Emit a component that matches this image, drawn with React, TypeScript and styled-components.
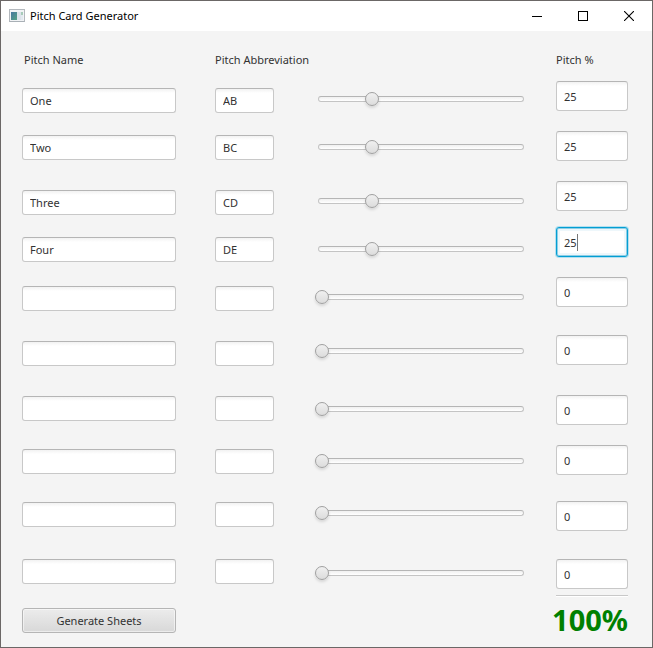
import React, { useState } from "react";
import styled, { createGlobalStyle, css } from "styled-components";

const GlobalStyle = createGlobalStyle`
  *, *::before, *::after { box-sizing: border-box; }
  body { margin: 0; background: #f4f4f4; }
  body, button, input { font-family: "Noto Sans", "Open Sans", sans-serif; font-size: 11px; }
`;

const Window = styled.div`
  display: flex;
  flex-direction: column;
  min-height: 100vh;
  border: 1px solid #6b6766;
  background: #f4f4f4;
  color: #323232;
`;

const TitleBar = styled.header`
  display: flex;
  align-items: center;
  height: 30px;
  padding-left: 8px;
  background: #fff;
  color: #000;
`;

const Title = styled.h1`
  flex: 1;
  margin: 0 0 0 5px;
  font-size: 11px;
  font-weight: 400;
  line-height: 16px;
`;

const CaptionButton = styled.button`
  display: flex;
  align-items: center;
  justify-content: center;
  width: 46px;
  height: 30px;
  padding: 0;
  border: 0;
  background: none;
`;

const Form = styled.main`
  display: grid;
  grid-template-columns: 154px 59px minmax(0, 1fr) 72px;
  column-gap: 39px;
  padding: 21px 24px 4px 21px;
`;

const Column = styled.section`
  display: flex;
  flex-direction: column;
`;

const SliderColumn = styled(Column)`
  padding-top: 39px;
  margin: 0 -10px 0 2px;
`;

const Heading = styled.h2<{ $space: number; $indent?: number }>`
  margin: 0 0 ${(p) => p.$space}px;
  padding-left: ${(p) => p.$indent ?? 0}px;
  font-size: 11px;
  font-weight: 400;
  line-height: 16px;
  white-space: nowrap;
`;

const Field = styled.input<{ $gap: number; $tall?: boolean; $active?: boolean }>`
  width: 100%;
  height: ${(p) => (p.$tall ? 30 : 25)}px;
  margin: ${(p) => p.$gap}px 0 0;
  padding: 0 7px;
  border: 1px solid #c8c8c8;
  border-top-color: #b5b5b5;
  border-radius: 3px;
  outline: none;
  background: linear-gradient(#f2f2f2, #fff 4px);
  color: #323232;
  ${(p) =>
    p.$active &&
    css`
      border-color: #039ed3;
      box-shadow: 0 0 0 1px #b4e0ef, inset 0 0 0 1px #8fcfe6, inset 0 0 0 3px #eef7fb;
      background: linear-gradient(#777, #777) 20px 6px / 1px 17px no-repeat #fff;
      caret-color: transparent;
    `}
`;

const SliderBox = styled.div<{ $gap: number }>`
  display: grid;
  align-items: center;
  height: 16px;
  margin-top: ${(p) => p.$gap}px;

  &::before {
    content: "";
    grid-area: 1 / 1;
    height: 6px;
    margin: 0 3px;
    border: 1px solid #c4c4c4;
    border-top-color: #b5b5b5;
    border-radius: 3px;
    background: linear-gradient(#f0f0f0, #fff);
  }
`;

const Slider = styled.input`
  grid-area: 1 / 1;
  width: 100%;
  height: 16px;
  margin: 0;
  appearance: none;
  background: transparent;

  &::-webkit-slider-thumb {
    appearance: none;
    width: 14px;
    height: 14px;
    border: 1px solid #a0a0a0;
    border-radius: 50%;
    background: linear-gradient(#f0f0f0, #dcdcdc);
    box-shadow: 0 2px 3px rgba(0, 0, 0, 0.12);
  }
`;

const GenerateButton = styled.button`
  height: 25px;
  margin-top: 24px;
  padding: 0;
  border: 1px solid #b5b5b5;
  border-radius: 3px;
  background: linear-gradient(#ececec, #d8d8d8);
  box-shadow: inset 0 0 0 1px rgba(255, 255, 255, 0.5);
  color: #323232;
`;

const Total = styled.output`
  display: flex;
  justify-content: flex-end;
  margin-top: 6px;
  padding-top: 4px;
  border-top: 1px solid #c8c8c8;
  box-shadow: inset 0 1px 0 #fff;
  color: #008000;
  font-size: 29px;
  font-weight: 700;
  line-height: 40px;
`;

const pitches = [
  { name: "One", abbr: "AB", percent: 25 },
  { name: "Two", abbr: "BC", percent: 25 },
  { name: "Three", abbr: "CD", percent: 25 },
  { name: "Four", abbr: "DE", percent: 25 },
  ...Array.from({ length: 6 }, () => ({ name: "", abbr: "", percent: 0 })),
];

const textGaps = [0, 22, 30, 22, 24, 30, 30, 28, 28, 32];
const sliderGaps = [0, 32, 38, 32, 32, 38, 42, 36, 36, 44];
const percentGaps = [0, 20, 20, 16, 20, 28, 30, 20, 26, 28];
const activeRow = 3;

const AppIcon = () => (
  <svg width="16" height="14" viewBox="0 0 16 14" aria-hidden="true">
    <defs>
      <linearGradient id="pane" x1="0" y1="0" x2="1" y2="1">
        <stop offset="0" stopColor="#4777a0" />
        <stop offset="1" stopColor="#55a283" />
      </linearGradient>
    </defs>
    <rect x="0.5" y="0.5" width="15" height="12" fill="#f1f3f5" stroke="#b3b8bd" />
    <path d="M0.5 12.5h15" stroke="#a9b0b6" />
    <rect x="2" y="3" width="6" height="8" fill="url(#pane)" />
    <rect x="8" y="3" width="4" height="8" fill="#dce3ea" />
    <rect x="12" y="3" width="2" height="3" fill="#a7cbb9" />
    <rect x="12" y="6" width="2" height="5" fill="#e3e9f0" />
  </svg>
);

export default function App() {
  const [rows, setRows] = useState(pitches);
  const update = (index: number, change: Partial<(typeof pitches)[number]>) =>
    setRows(rows.map((row, i) => (i === index ? { ...row, ...change } : row)));
  const total = rows.reduce((sum, row) => sum + row.percent, 0);

  return (
    <>
      <GlobalStyle />
      <Window>
        <TitleBar>
          <AppIcon />
          <Title>Pitch Card Generator</Title>
          <CaptionButton type="button" aria-label="Minimize">
            <svg width="10" height="10" viewBox="0 0 10 10">
              <path d="M0 5.5h10" stroke="#000" />
            </svg>
          </CaptionButton>
          <CaptionButton type="button" aria-label="Maximize">
            <svg width="10" height="10" viewBox="0 0 10 10">
              <rect x="0.5" y="0.5" width="9" height="9" fill="none" stroke="#000" />
            </svg>
          </CaptionButton>
          <CaptionButton type="button" aria-label="Close">
            <svg width="10" height="10" viewBox="0 0 10 10">
              <path d="M0 0l10 10M10 0l-10 10" stroke="#000" strokeWidth="1.1" />
            </svg>
          </CaptionButton>
        </TitleBar>
        <Form>
          <Column>
            <Heading $space={20} $indent={2}>Pitch Name</Heading>
            {rows.map((row, i) => (
              <Field
                key={i}
                type="text"
                aria-label={`Pitch name ${i + 1}`}
                $gap={textGaps[i]}
                value={row.name}
                onChange={(e) => update(i, { name: e.target.value })}
              />
            ))}
            <GenerateButton type="button">Generate Sheets</GenerateButton>
          </Column>
          <Column>
            <Heading $space={20}>Pitch Abbreviation</Heading>
            {rows.map((row, i) => (
              <Field
                key={i}
                type="text"
                aria-label={`Pitch abbreviation ${i + 1}`}
                $gap={textGaps[i]}
                value={row.abbr}
                onChange={(e) => update(i, { abbr: e.target.value })}
              />
            ))}
          </Column>
          <SliderColumn>
            {rows.map((row, i) => (
              <SliderBox key={i} $gap={sliderGaps[i]}>
                <Slider
                  type="range"
                  min={0}
                  max={100}
                  aria-label={`Pitch share ${i + 1}`}
                  value={row.percent}
                  onChange={(e) => update(i, { percent: Number(e.target.value) })}
                />
              </SliderBox>
            ))}
          </SliderColumn>
          <Column>
            <Heading $space={13}>Pitch %</Heading>
            {rows.map((row, i) => (
              <Field
                key={i}
                type="text"
                inputMode="numeric"
                aria-label={`Pitch percent ${i + 1}`}
                $tall
                $gap={percentGaps[i]}
                $active={i === activeRow}
                value={row.percent}
                onChange={(e) => update(i, { percent: Number(e.target.value) || 0 })}
              />
            ))}
            <Total>{total}%</Total>
          </Column>
        </Form>
      </Window>
    </>
  );
}
